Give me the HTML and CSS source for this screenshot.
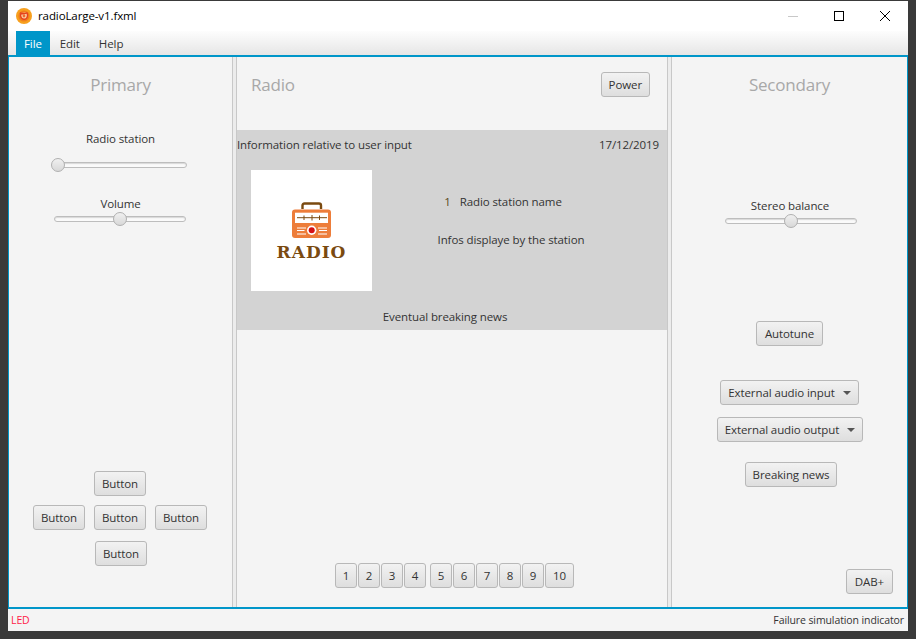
FILE: index.html
```html
<!DOCTYPE html>
<html lang="en">

<head>
    <meta charset="UTF-8">
    <meta name="viewport" content="width=device-width, initial-scale=1.0">
    <title>radioLarge-v1.fxml</title>
    <link rel="stylesheet" href="styles.css">
</head>

<body>
    <div class="window">
        <div class="titlebar">
            <svg class="app-icon" width="16" height="16" viewBox="0 0 16 16">
                <circle cx="8" cy="8" r="8" fill="#f7a01e"/>
                <circle cx="8" cy="8" r="5.6" fill="#f07d1c"/>
                <path d="M4 5 L8 5.8 L11.5 4.6 M4.8 5.6 C3.8 9 6 11.5 8.5 11.2 C11 11 12.2 8 11.2 5.2" fill="#f9d2a8" stroke="#e6401c" stroke-width="1.4"/>
                <circle cx="8" cy="8" r="1.4" fill="#ef6a2a"/>
            </svg>
            <span class="title-text">radioLarge-v1.fxml</span>
            <div class="win-controls">
                <svg class="win-btn" width="12" height="12" viewBox="0 0 12 12"><path d="M1 6.5 H11" stroke="#c8c8c8"/></svg>
                <svg class="win-btn" width="12" height="12" viewBox="0 0 12 12"><rect x="1.5" y="1.5" width="9" height="9" fill="none" stroke="#000"/></svg>
                <svg class="win-btn" width="12" height="12" viewBox="0 0 12 12"><path d="M1 1 L11 11 M11 1 L1 11" stroke="#000"/></svg>
            </div>
        </div>

        <div class="menubar">
            <span class="menu-item active">File</span>
            <span class="menu-item">Edit</span>
            <span class="menu-item">Help</span>
        </div>

        <div class="main">
            <div class="panel panel-left">
                <div class="panel-title">Primary</div>
                <div class="label radio-label">Radio station</div>
                <div class="slider slider-station"><div class="thumb" style="margin-left:-4px"></div></div>
                <div class="label volume-label">Volume</div>
                <div class="slider slider-volume"><div class="thumb" style="margin-left:58px"></div></div>

                <div class="button-cross">
                    <div class="btn-row"><button class="btn btn-fixed">Button</button></div>
                    <div class="btn-row">
                        <button class="btn btn-fixed">Button</button>
                        <button class="btn btn-fixed">Button</button>
                        <button class="btn btn-fixed">Button</button>
                    </div>
                    <div class="btn-row btn-row-last"><button class="btn btn-fixed">Button</button></div>
                </div>
            </div>

            <div class="divider"></div>

            <div class="panel panel-center">
                <div class="center-head">
                    <div class="panel-title">Radio</div>
                    <button class="btn">Power</button>
                </div>

                <div class="display">
                    <div class="display-top">
                        <span>Information relative to user input</span>
                        <span>17/12/2019</span>
                    </div>
                    <div class="display-body">
                        <div class="logo">
                            <svg width="40" height="37" viewBox="0 0 40 37">
                                <path d="M10.5 7 V3.5 Q10.5 1.5 12.5 1.5 H27 Q29 1.5 29 3.5 V7" fill="none" stroke="#7a4a10" stroke-width="2.4"/>
                                <rect x="0" y="7.5" width="39" height="28.5" rx="3" fill="#ed7d3a"/>
                                <rect x="3" y="10.7" width="33" height="10.3" fill="#fff"/>
                                <path d="M5 15.7 H35 M12 13.5 V18 M20 13 V18.5 M27.5 13.5 V18" stroke="#7a4a10" stroke-width="1"/>
                                <path d="M5 26 H14 M5 28.5 H12.5 M5 32 H14 M26 26 H35 M27 28.5 H35 M26 32 H35" stroke="#fff" stroke-width="1"/>
                                <circle cx="19.7" cy="28.3" r="4.7" fill="#fff"/>
                                <circle cx="19.7" cy="28.3" r="3" fill="#d40f14"/>
                            </svg>
                            <span class="logo-text">RADIO</span>
                        </div>
                        <div class="station-info">
                            <div class="station-line">
                                <span class="station-num">1</span>
                                <span>Radio station name</span>
                            </div>
                            <div>Infos displaye by the station</div>
                        </div>
                    </div>
                    <div class="display-news">Eventual breaking news</div>
                </div>

                <div class="presets">
                    <button class="btn btn-num">1</button>
                    <button class="btn btn-num">2</button>
                    <button class="btn btn-num">3</button>
                    <button class="btn btn-num preset-gap">4</button>
                    <button class="btn btn-num">5</button>
                    <button class="btn btn-num">6</button>
                    <button class="btn btn-num">7</button>
                    <button class="btn btn-num">8</button>
                    <button class="btn btn-num">9</button>
                    <button class="btn btn-ten">10</button>
                </div>
            </div>

            <div class="divider"></div>

            <div class="panel panel-right">
                <div class="panel-title">Secondary</div>
                <div class="label stereo-label">Stereo balance</div>
                <div class="slider slider-stereo"><div class="thumb" style="margin-left:58px"></div></div>
                <button class="btn autotune">Autotune</button>
                <button class="btn btn-menu ext-input">External audio input<span class="arrow"></span></button>
                <button class="btn btn-menu ext-output">External audio output<span class="arrow"></span></button>
                <button class="btn breaking">Breaking news</button>
                <button class="btn dab">DAB+</button>
            </div>
        </div>

        <div class="statusbar">
            <span class="led">LED</span>
            <span>Failure simulation indicator</span>
        </div>
    </div>
</body>

</html>
```

FILE: styles.css
```css
* {
    box-sizing: border-box;
}

html,
body {
    height: 100%;
}

body {
    margin: 0;
    padding: 1px 8px 8px;
    overflow: hidden;
    background-color: #3a3a3a;
    font-family: "Open Sans", "Noto Sans", sans-serif;
    font-size: 11.5px;
    letter-spacing: -0.1px;
    line-height: 16px;
    color: #333;
}

.window {
    display: flex;
    flex-direction: column;
    height: 630px;
    background-color: #f4f4f4;
}

/* title bar */
.titlebar {
    display: flex;
    align-items: center;
    flex: 0 0 30px;
    padding-left: 8px;
    background-color: #fff;
    color: #000;
}

.app-icon {
    margin-right: 6px;
}

.win-controls {
    display: flex;
    gap: 34px;
    margin-left: auto;
    padding-right: 17px;
}

/* menu */
.menubar {
    display: flex;
    flex: 0 0 24px;
    padding-left: 8px;
    background: linear-gradient(#fdfdfd, #e6e6e6);
}

.menu-item {
    display: flex;
    align-items: center;
    padding: 2px 9px 0 10px;
}

.menu-item.active {
    padding: 2px 8px 0;
    background-color: #0096c9;
    color: #fff;
}

/* main area */
.main {
    display: flex;
    flex: 0 0 554px;
    min-height: 0;
    border: solid #0096c9;
    border-width: 2px 1px;
}

.panel {
    display: flex;
    flex-direction: column;
    min-height: 0;
}

.panel-left {
    flex: 0 0 223px;
    align-items: center;
    padding: 16px 0 41px;
}

.panel-center {
    flex: 0 0 430px;
    padding-bottom: 19px;
}

.panel-right {
    flex: 0 0 235px;
    align-items: center;
    padding: 16px 0 13px;
}

.divider {
    flex: 0 0 5px;
    border-left: 1px solid #c8c8c8;
    border-right: 1px solid #c8c8c8;
    background-color: #ececec;
}

.panel-title {
    font-size: 17px;
    letter-spacing: -0.2px;
    line-height: 24px;
    color: #a8a8a8;
}

.radio-label {
    margin-top: 34px;
}

.volume-label {
    margin-top: 28px;
}

.stereo-label {
    margin: 101px 0 0 1px;
}

/* sliders */
.slider {
    display: flex;
    align-items: center;
    flex: none;
    height: 6px;
    border: 1px solid #bdbdbd;
    border-radius: 3px;
    background-color: #fafafa;
    box-shadow: inset 0 1px 1px #d8d8d8;
}

.slider-station {
    width: 133px;
    margin: 15px 1px 0 0;
}

.slider-volume {
    width: 132px;
    margin: 4px 1px 0 0;
}

.slider-stereo {
    width: 132px;
    margin: 4px 0 0 3px;
}

.thumb {
    flex: 0 0 14px;
    height: 14px;
    border: 1px solid #b0b0b0;
    border-radius: 50%;
    background: linear-gradient(#f0f0f0, #d8d8d8);
}

/* buttons */
.btn {
    flex: none;
    height: 25px;
    padding: 0 7px;
    border: 1px solid #b8b8b8;
    border-radius: 3px;
    background: linear-gradient(#f2f2f2, #dedede);
    font-family: inherit;
    font-size: inherit;
    letter-spacing: inherit;
    color: #333;
    white-space: nowrap;
}

.btn-fixed {
    width: 52px;
    padding: 0;
}

.button-cross {
    margin: auto 1px 0 0;
}

.btn-row {
    display: flex;
    justify-content: center;
    gap: 9px;
    margin-bottom: 9px;
}

.btn-row-last {
    margin: 11px 0 0 2px;
}

.center-head {
    display: flex;
    justify-content: space-between;
    align-items: center;
    margin-top: 15px;
    padding: 0 17px 0 14px;
}

.display {
    flex: none;
    margin-top: 33px;
    height: 200px;
    padding-top: 7px;
    background-color: #d3d3d3;
}

.display-top {
    display: flex;
    justify-content: space-between;
    padding-right: 8px;
}

.display-body {
    display: flex;
    margin: 17px 17px 0 14px;
}

.logo {
    display: flex;
    flex-direction: column;
    align-items: center;
    flex: 0 0 121px;
    height: 121px;
    padding-top: 32px;
    background-color: #fff;
}

.logo-text {
    margin-top: 3px;
    font-family: "DejaVu Serif", serif;
    font-size: 17px;
    font-weight: bold;
    line-height: 20px;
    letter-spacing: 1px;
    color: #7a4a10;
}

.station-info {
    flex: 1;
    display: flex;
    flex-direction: column;
    align-items: center;
    gap: 22px;
    padding-top: 24px;
}

.station-line {
    display: flex;
    gap: 9px;
    margin-right: 16px;
}

.station-num {
    color: #5a4a20;
}

.display-news {
    margin-top: 18px;
    padding-right: 14px;
    text-align: center;
}

.presets {
    display: flex;
    gap: 1px;
    margin-top: auto;
    padding-left: 98px;
}

.btn-num {
    width: 22px;
    padding: 0;
}

.preset-gap {
    margin-right: 3px;
}

.btn-ten {
    width: 29px;
    padding: 0;
}

.btn-menu {
    display: flex;
    align-items: center;
}

.arrow {
    width: 0;
    height: 0;
    margin-left: 8px;
    border-left: 4px solid transparent;
    border-right: 4px solid transparent;
    border-top: 4px solid #555;
}

.autotune {
    margin-top: 97px;
    padding: 0 7.5px;
}

.ext-input {
    margin-top: 34px;
}

.ext-output {
    margin: 12px 0 0 1px;
}

.breaking {
    margin: 20px 0 0 3px;
}

.dab {
    margin-top: auto;
    align-self: flex-end;
    margin-right: 14px;
    padding: 0 8px;
}

/* status */
.statusbar {
    display: flex;
    justify-content: space-between;
    align-items: center;
    flex: 0 0 22px;
    padding: 0 4px 0 3px;
    font-size: 10.5px;
}

.led {
    color: #ff1a4a;
}
```
